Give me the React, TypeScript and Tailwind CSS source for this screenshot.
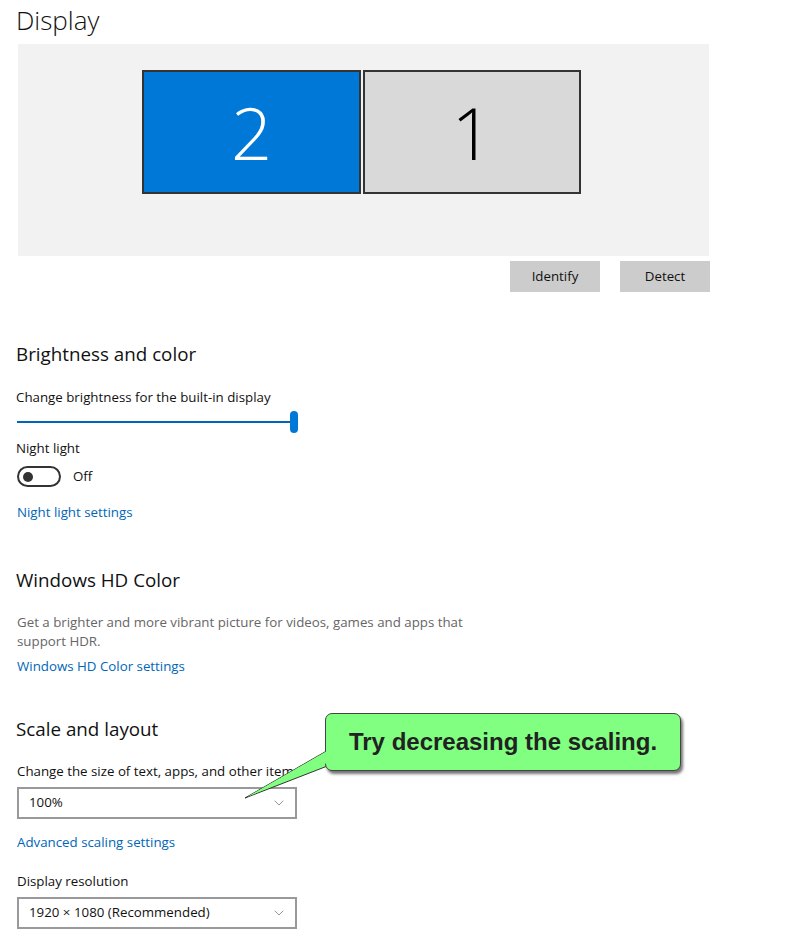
import { ChevronDown } from 'lucide-react'

const font = { fontFamily: '"Open Sans", "Noto Sans", sans-serif' }

function Heading({ children, className }: { children: React.ReactNode; className?: string }) {
  return <h2 className={'text-[18.8px] leading-[28px] text-[#111] ' + (className ?? '')}>{children}</h2>
}

function Select({ value, className }: { value: string; className?: string }) {
  return (
    <div
      className={
        'flex h-[32px] w-[280px] items-center justify-between border-2 border-[#999] pl-[10px] pr-[8px] text-[13.3px] text-[#111] ' +
        (className ?? '')
      }
    >
      <span>{value}</span>
      <ChevronDown className="h-[16px] w-[16px] text-[#777]" strokeWidth={1.2} />
    </div>
  )
}

export default function App() {
  return (
    <div className="relative min-h-[935px] w-[790px] overflow-hidden bg-white pl-[16px] pt-[2px]" style={font}>
      <h1 className="text-[26px] font-light leading-[36px] text-[#111]">Display</h1>

      <div className="ml-[2px] mt-[6px] flex h-[212px] w-[691px] justify-center gap-[2px] bg-[#f2f2f2] pt-[26px] pr-[4px]">
        <div className="flex h-[124px] w-[219px] items-center justify-center border-2 border-[#333] bg-[#0078d7] text-[72px] font-light text-white">
          2
        </div>
        <div className="flex h-[124px] w-[218px] items-center justify-center border-2 border-[#333] bg-[#d9d9d9] text-[72px] font-light text-black">
          1
        </div>
      </div>

      <div className="mt-[5px] flex w-[694px] justify-end gap-[20px] text-[13.3px] text-[#111]">
        <div className="flex h-[31px] w-[90px] items-center justify-center bg-[#cccccc]">Identify</div>
        <div className="flex h-[31px] w-[90px] items-center justify-center bg-[#cccccc]">Detect</div>
      </div>

      <Heading className="mt-[48px]">Brightness and color</Heading>
      <p className="mt-[19px] text-[13.3px] leading-[20px] text-[#111]">Change brightness for the built-in display</p>
      <div className="relative mt-[3px] h-[24px] w-[282px]">
        <div className="absolute left-[1px] right-[4px] top-[11px] h-[2px] bg-[#0067b8]" />
        <div className="absolute right-0 top-[1px] h-[22px] w-[8px] rounded-full bg-[#0078d7]" />
      </div>
      <p className="mt-[4px] text-[13.3px] leading-[20px] text-[#111]">Night light</p>
      <div className="mt-[8px] flex items-center">
        <div className="ml-[1px] flex h-[21px] w-[44px] items-center rounded-full border-2 border-[#333] pl-[4px]">
          <div className="h-[10px] w-[10px] rounded-full bg-[#333]" />
        </div>
        <span className="ml-[12px] text-[13.3px] text-[#111]">Off</span>
      </div>
      <p className="mt-[15px] ml-[1px] text-[13.3px] leading-[20px] text-[#0067b8]">Night light settings</p>

      <Heading className="mt-[44px]">Windows HD Color</Heading>
      <p className="mt-[19px] ml-[1px] w-[460px] text-[13.3px] leading-[19px] text-[#666]">
        Get a brighter and more vibrant picture for videos, games and apps that support HDR.
      </p>
      <p className="mt-[5px] ml-[1px] text-[13.3px] leading-[20px] text-[#0067b8]">Windows HD Color settings</p>

      <Heading className="mt-[39px]">Scale and layout</Heading>
      <p className="mt-[18px] ml-[1px] text-[13.3px] leading-[20px] text-[#111]">Change the size of text, apps, and other items</p>
      <Select value="100%" className="ml-[1px] mt-[6px]" />
      <p className="mt-[13px] ml-[1px] text-[13.3px] leading-[20px] text-[#0067b8]">Advanced scaling settings</p>
      <p className="mt-[19px] ml-[1px] text-[13.3px] leading-[20px] text-[#111]">Display resolution</p>
      <Select value="1920 × 1080 (Recommended)" className="ml-[1px] mt-[6px]" />

      {/* callout */}
      <svg className="absolute left-[240px] top-[745px] h-[60px] w-[100px]" viewBox="0 0 100 60">
        <polygon points="90,4 90,20 5,53" fill="#80ff80" stroke="#333" strokeWidth="1" />
      </svg>
      <div className="absolute left-[325px] top-[713px] flex h-[58px] w-[356px] items-center justify-center rounded-[7px] border border-[#444] bg-[#80ff80] shadow-[2px_3px_3px_rgba(0,0,0,0.55)]">
        <span className="text-[24px] font-bold text-[#222]" style={{ fontFamily: '"Liberation Sans", Arial, sans-serif' }}>
          Try decreasing the scaling.
        </span>
      </div>
      <svg className="absolute left-[240px] top-[745px] h-[60px] w-[100px]" viewBox="0 0 100 60">
        <polygon points="87,6 87,18 7,52" fill="#80ff80" />
      </svg>
    </div>
  )
}
